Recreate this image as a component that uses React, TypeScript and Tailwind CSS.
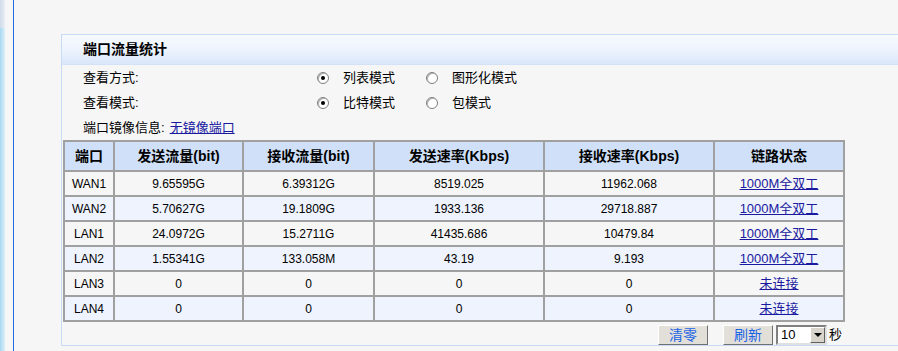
import React from "react";

const font = { fontFamily: '"Liberation Sans", "Noto Sans CJK SC", sans-serif' };

function Radio({ checked }: { checked?: boolean }) {
  return (
    <span className="inline-flex items-center justify-center w-[12px] h-[12px] rounded-full border border-[#7f7f7f] bg-white shadow-[inset_1px_1px_0_#b0b0b0]">
      {checked && <span className="w-[4px] h-[4px] rounded-full bg-black" />}
    </span>
  );
}

const rows = [
  ["WAN1", "9.65595G", "6.39312G", "8519.025", "11962.068", "1000M全双工"],
  ["WAN2", "5.70627G", "19.1809G", "1933.136", "29718.887", "1000M全双工"],
  ["LAN1", "24.0972G", "15.2711G", "41435.686", "10479.84", "1000M全双工"],
  ["LAN2", "1.55341G", "133.058M", "43.19", "9.193", "1000M全双工"],
  ["LAN3", "0", "0", "0", "0", "未连接"],
  ["LAN4", "0", "0", "0", "0", "未连接"],
];

const widths = ["w-[50px]", "w-[129px]", "w-[131px]", "w-[170px]", "w-[170px]", "w-[130px]"];
const heads = ["端口", "发送流量(bit)", "接收流量(bit)", "发送速率(Kbps)", "接收速率(Kbps)", "链路状态"];

export default function App() {
  return (
    <div className="w-[898px] h-[351px] bg-[#f6f6f6] flex overflow-hidden text-[13px] text-black" style={font}>
      <div className="w-[5px] h-full flex flex-col">
        <div className="h-[28px] bg-gradient-to-r from-[#cfdbe8] to-[#e8eef5]" />
        <div className="flex-1 bg-gradient-to-r from-[#a8d8f0] to-[#dceff9]" />
      </div>
      <div className="ml-[8px] w-px h-full bg-[#1e6ee0]" />
      <div className="ml-[47px] mt-[34px] h-[312px] flex-1 border-l border-t border-b border-[#c8dbf6] flex flex-col">
        <div className="h-[30px] bg-gradient-to-b from-[#f7faff] via-[#eef4fd] to-[#d9e6fa] border-b border-[#d3e2f8] flex items-center pl-[21px]">
          <span className="font-bold text-[14px]">端口流量统计</span>
        </div>
        <div className="pl-[21px] flex flex-col">
          <div className="h-[25px] flex items-center">
            <span className="w-[234px]">查看方式:</span>
            <Radio checked />
            <span className="ml-[14px] w-[83px]">列表模式</span>
            <Radio />
            <span className="ml-[14px]">图形化模式</span>
          </div>
          <div className="h-[25px] flex items-center">
            <span className="w-[234px]">查看模式:</span>
            <Radio checked />
            <span className="ml-[14px] w-[83px]">比特模式</span>
            <Radio />
            <span className="ml-[14px]">包模式</span>
          </div>
          <div className="h-[25px] flex items-center">
            <span>端口镜像信息:</span>
            <a className="ml-[5px] text-[#1a1aa0] underline">无镜像端口</a>
          </div>
        </div>
        <div className="ml-px">
          <table className="border-collapse table-fixed w-[780px] border-2 border-[#9a9a9a]">
            <thead>
              <tr className="h-[30px] bg-[#cfe0f8]">
                {heads.map((h, i) => (
                  <th key={i} className={`${widths[i]} border-2 border-[#a0a0a0] font-bold text-[14px] text-center p-0`}>
                    {h}
                  </th>
                ))}
              </tr>
            </thead>
            <tbody>
              {rows.map((r, ri) => (
                <tr key={ri} className={`h-[25px] text-[12px] ${ri % 2 === 1 ? "bg-[#eef3fe]" : "bg-[#f6f6f6]"}`}>
                  {r.map((c, ci) => (
                    <td key={ci} className="border-2 border-[#a0a0a0] text-center p-0">
                      {ci === 5 ? <a className="text-[#1a1aa0] underline text-[13px]">{c}</a> : c}
                    </td>
                  ))}
                </tr>
              ))}
            </tbody>
          </table>
        </div>
        <div className="flex items-center mt-[3px] ml-[596px]">
          <button className="w-[50px] h-[20px] bg-[#e2dfd9] border border-t-white border-l-white border-r-[#707070] border-b-[#707070] text-[#1a64e6] text-[14px] leading-none">
            清零
          </button>
          <button className="ml-[15px] w-[50px] h-[20px] bg-[#e2dfd9] border border-t-white border-l-white border-r-[#707070] border-b-[#707070] text-[#1a64e6] text-[14px] leading-none">
            刷新
          </button>
          <div className="ml-[3px] w-[51px] h-[20px] bg-white border-2 border-t-[#808080] border-l-[#808080] border-r-[#e0e0e0] border-b-[#e0e0e0] flex items-center">
            <span className="flex-1 pl-[3px] text-[13px]">10</span>
            <span className="w-[15px] h-full bg-[#d8d4cc] border border-t-white border-l-white border-r-[#606060] border-b-[#606060] flex items-center justify-center">
              <span className="w-0 h-0 border-l-[4px] border-r-[4px] border-t-[4px] border-l-transparent border-r-transparent border-t-black" />
            </span>
          </div>
          <span className="ml-[2px] text-[13px]">秒</span>
        </div>
      </div>
    </div>
  );
}
